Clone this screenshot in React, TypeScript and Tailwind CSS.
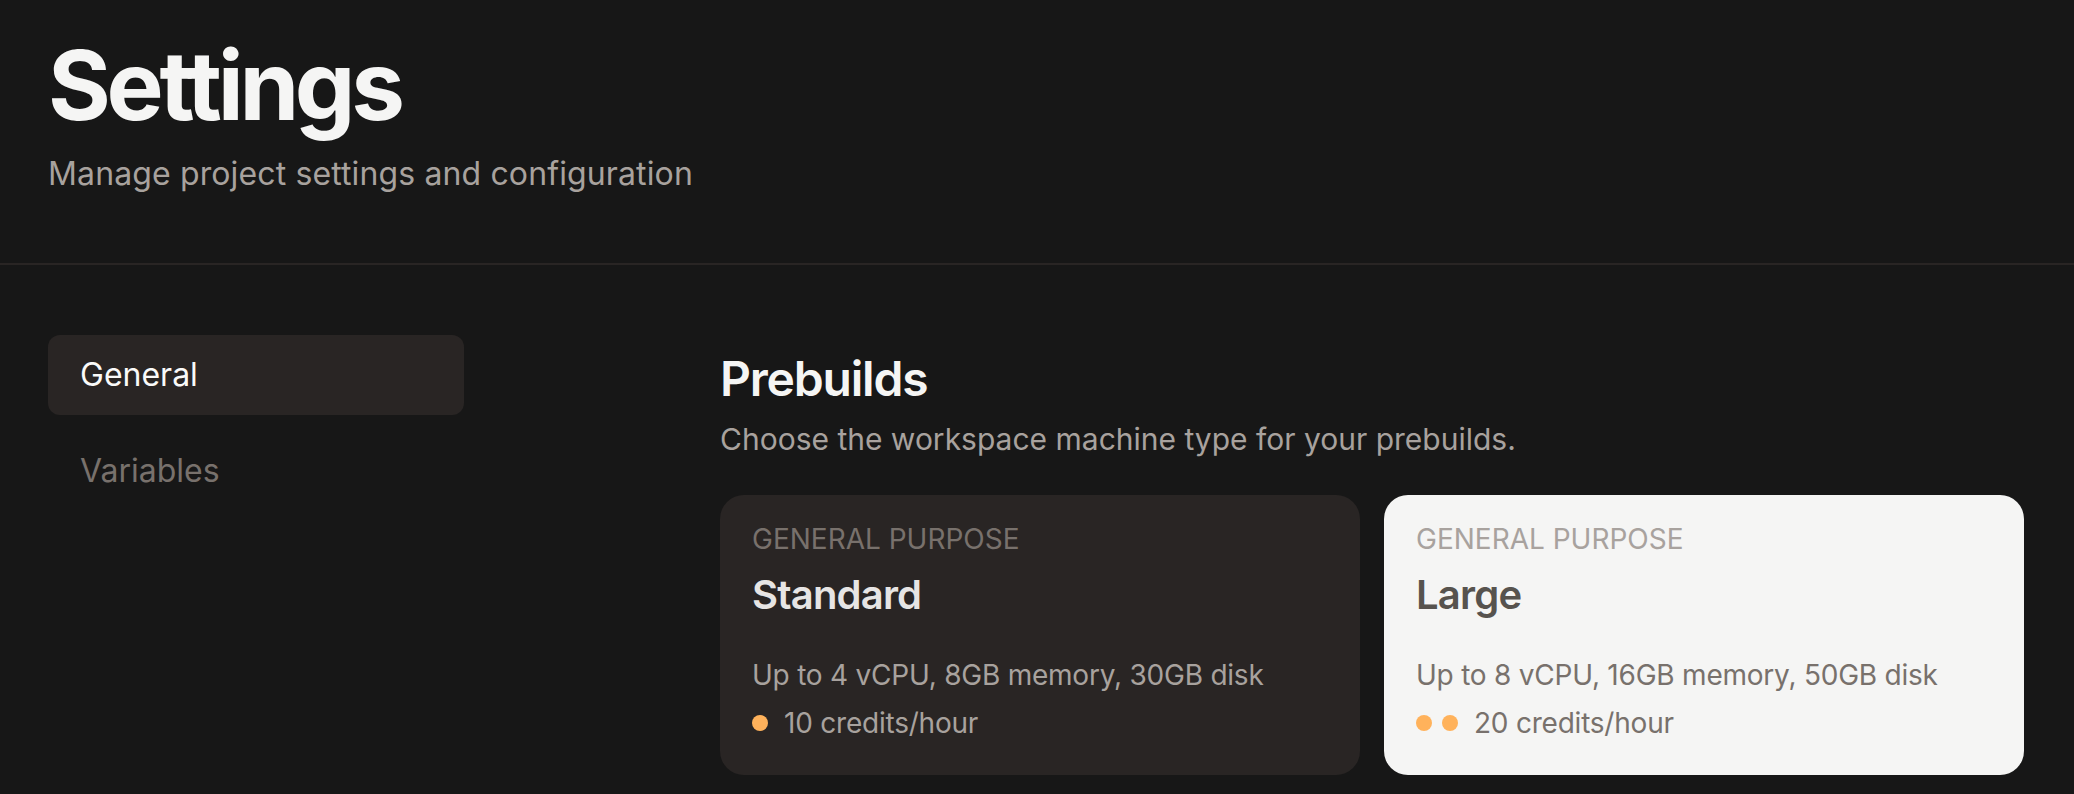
import React from "react";

type Machine = {
  label: string;
  name: string;
  specs: string;
  credits: number;
  dots: number;
  selected?: boolean;
};

const machines: Machine[] = [
  {
    label: "General purpose",
    name: "Standard",
    specs: "Up to 4 vCPU, 8GB memory, 30GB disk",
    credits: 10,
    dots: 1,
  },
  {
    label: "General purpose",
    name: "Large",
    specs: "Up to 8 vCPU, 16GB memory, 50GB disk",
    credits: 20,
    dots: 2,
    selected: true,
  },
];

function MachineCard({ m }: { m: Machine }) {
  const sel = m.selected;
  return (
    <button
      className={`text-left rounded-[24px] px-[32px] pt-[24px] pb-[32px] flex flex-col ${
        sel ? "bg-[#f5f5f4]" : "bg-[#292524]"
      }`}
    >
      <span
        className={`uppercase text-[28px] leading-[40px] ${
          sel ? "text-[#a8a29e]" : "text-[#78716c]"
        }`}
      >
        {m.label}
      </span>
      <span
        className={`mt-[8px] text-[40px] leading-[56px] font-semibold tracking-[-0.02em] ${
          sel ? "text-[#57534e]" : "text-[#e7e5e4]"
        }`}
      >
        {m.name}
      </span>
      <span
        className={`mt-[32px] text-[28px] leading-[40px] tracking-[-0.008em] ${
          sel ? "text-[#78716c]" : "text-[#a8a29e]"
        }`}
      >
        {m.specs}
      </span>
      <span
        className={`mt-[8px] flex items-center gap-[16px] text-[28px] leading-[40px] tracking-[-0.008em] ${
          sel ? "text-[#78716c]" : "text-[#a8a29e]"
        }`}
      >
        <span className="flex items-center gap-[10px]">
          {Array.from({ length: m.dots }).map((_, i) => (
            <span key={i} className="w-[16px] h-[16px] rounded-full bg-[#ffb25b]" />
          ))}
        </span>
        {m.credits} credits/hour
      </span>
    </button>
  );
}

export default function App() {
  return (
    <div
      className="min-h-screen bg-[#171717] text-[#f5f5f4]"
      style={{ fontFamily: "Inter, 'Noto Sans', sans-serif" }}
    >
      {/* Page header */}
      <header className="px-[48px] pt-[37px] pb-[65px] border-b-2 border-[#292524]">
        <h1 className="text-[96px] leading-[96px] font-bold tracking-[-0.045em] text-[#f5f5f4]">
          Settings
        </h1>
        <p className="mt-[17px] text-[32px] leading-[48px] tracking-[0.004em] text-[#a8a29e]">
          Manage project settings and configuration
        </p>
      </header>

      <div className="flex px-[48px] pt-[70px]">
        {/* Side nav */}
        <nav className="w-[416px] flex flex-col gap-[16px] shrink-0">
          <a className="h-[80px] flex items-center px-[32px] rounded-[12px] bg-[#292524] text-[32px] text-[#fafaf9]">
            General
          </a>
          <a className="h-[80px] flex items-center px-[32px] rounded-[12px] text-[32px] text-[#78716c]">
            Variables
          </a>
        </nav>

        {/* Content */}
        <main className="ml-[256px] w-[1304px] pt-[12px]">
          <h2 className="text-[48px] leading-[64px] font-semibold tracking-[-0.025em] text-[#f5f5f4]">
            Prebuilds
          </h2>
          <p className="mt-[4px] text-[30px] leading-[48px] text-[#a8a29e]">
            Choose the workspace machine type for your prebuilds.
          </p>
          <div className="mt-[32px] grid grid-cols-2 gap-[24px]">
            {machines.map((m) => (
              <MachineCard key={m.name} m={m} />
            ))}
          </div>
        </main>
      </div>
    </div>
  );
}
